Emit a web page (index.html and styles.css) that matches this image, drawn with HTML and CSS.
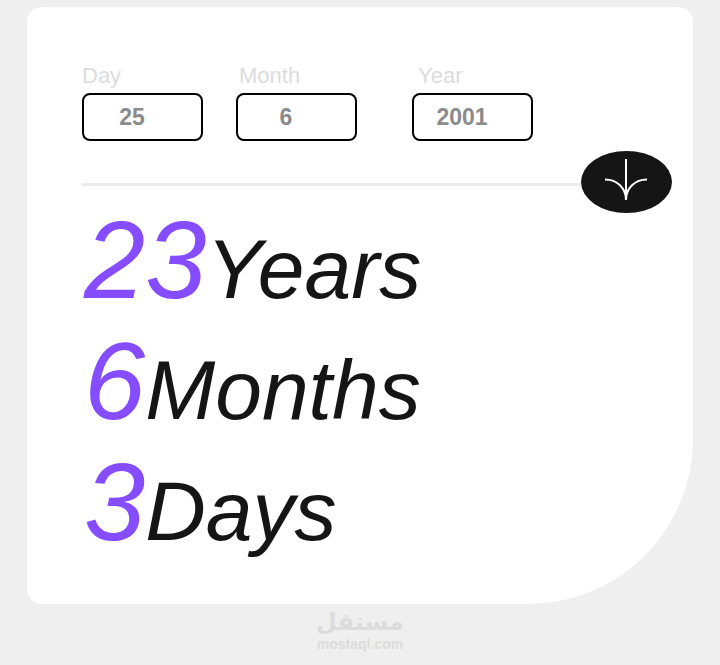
FILE: index.html
```html
<!DOCTYPE html>
<html lang="en">
<head>
    <meta charset="UTF-8">
    <meta name="viewport" content="width=device-width, initial-scale=1.0">
    <title>Age Calculator</title>
    <link rel="stylesheet" href="styles.css">
</head>
<body>
    <main class="card">
        <form class="date-form">
            <div class="fields">
                <div class="field">
                    <label for="day">Day</label>
                    <input type="number" id="day" value="25">
                </div>
                <div class="field field-month">
                    <label for="month">Month</label>
                    <input type="number" id="month" value="6">
                </div>
                <div class="field field-year">
                    <label for="year">Year</label>
                    <input type="number" id="year" value="2001">
                </div>
            </div>
            <div class="divider">
                <span class="line"></span>
                <button type="button" class="submit" aria-label="Calculate age">
                    <svg width="46" height="46" viewBox="0 0 46 46" fill="none" stroke="#fff" stroke-width="2">
                        <path d="M22 0V41M1 20.5C13 20.5 22 29 22 41C22 29 31 20.5 43 20.5"/>
                    </svg>
                </button>
            </div>
        </form>
        <section class="result">
            <p><span class="number">23</span>Years</p>
            <p><span class="number">6</span>Months</p>
            <p><span class="number">3</span>Days</p>
        </section>
    </main>
    <footer class="brand">
        <span class="brand-name" lang="ar" dir="rtl">مستقل</span>
        <span class="brand-site">mostaql.com</span>
    </footer>
</body>
</html>
```
FILE: styles.css
```css
* {
    margin: 0;
    padding: 0;
    box-sizing: border-box;
}

body {
    background: #efefef;
    color: #151515;
    font-family: Arial, "Liberation Sans", sans-serif;
}

.card {
    margin: 7px 27px 0;
    padding: 56px 21px 32px 55px;
    background: #fff;
    border-radius: 15px 15px 165px 15px;
}

.fields {
    display: flex;
}

.field {
    display: flex;
    flex-direction: column;
    width: 121px;
}

.field-month {
    margin-left: 33px;
}

.field-year {
    margin-left: 55px;
}

.field label {
    font-size: 22px;
    line-height: 26px;
    margin-bottom: 4px;
    color: #dcdcdc;
}

.field-month label {
    padding-left: 3px;
}

.field-year label {
    padding-left: 6px;
}

.field input {
    width: 100%;
    height: 48px;
    padding-right: 6px;
    border: 2px solid #000;
    border-radius: 8px;
    background: #fff;
    color: #8b8b8b;
    font-family: inherit;
    font-size: 23px;
    font-weight: bold;
    text-align: center;
}

.divider {
    display: flex;
    align-items: center;
    margin-top: 10px;
}

.line {
    flex: 1;
    height: 3px;
    margin-top: 4px;
    background: #ebebeb;
}

.submit {
    display: flex;
    align-items: center;
    justify-content: center;
    width: 91px;
    height: 62px;
    border: none;
    border-radius: 50%;
    background: #151515;
    cursor: pointer;
}

.result {
    margin-top: -4px;
    padding-left: 2px;
    font-size: 84px;
    font-style: italic;
}

.result p {
    line-height: 121px;
}

.number {
    font-size: 110px;
    line-height: 100px;
    color: #854dff;
}

.brand {
    display: flex;
    flex-direction: column;
    align-items: center;
    padding-top: 4px;
    color: #dcdcdc;
    font-weight: bold;
}

.brand-name {
    font-family: "DejaVu Sans", sans-serif;
    font-size: 24px;
    line-height: 28px;
}

.brand-site {
    font-size: 14px;
    line-height: 16px;
}
```
